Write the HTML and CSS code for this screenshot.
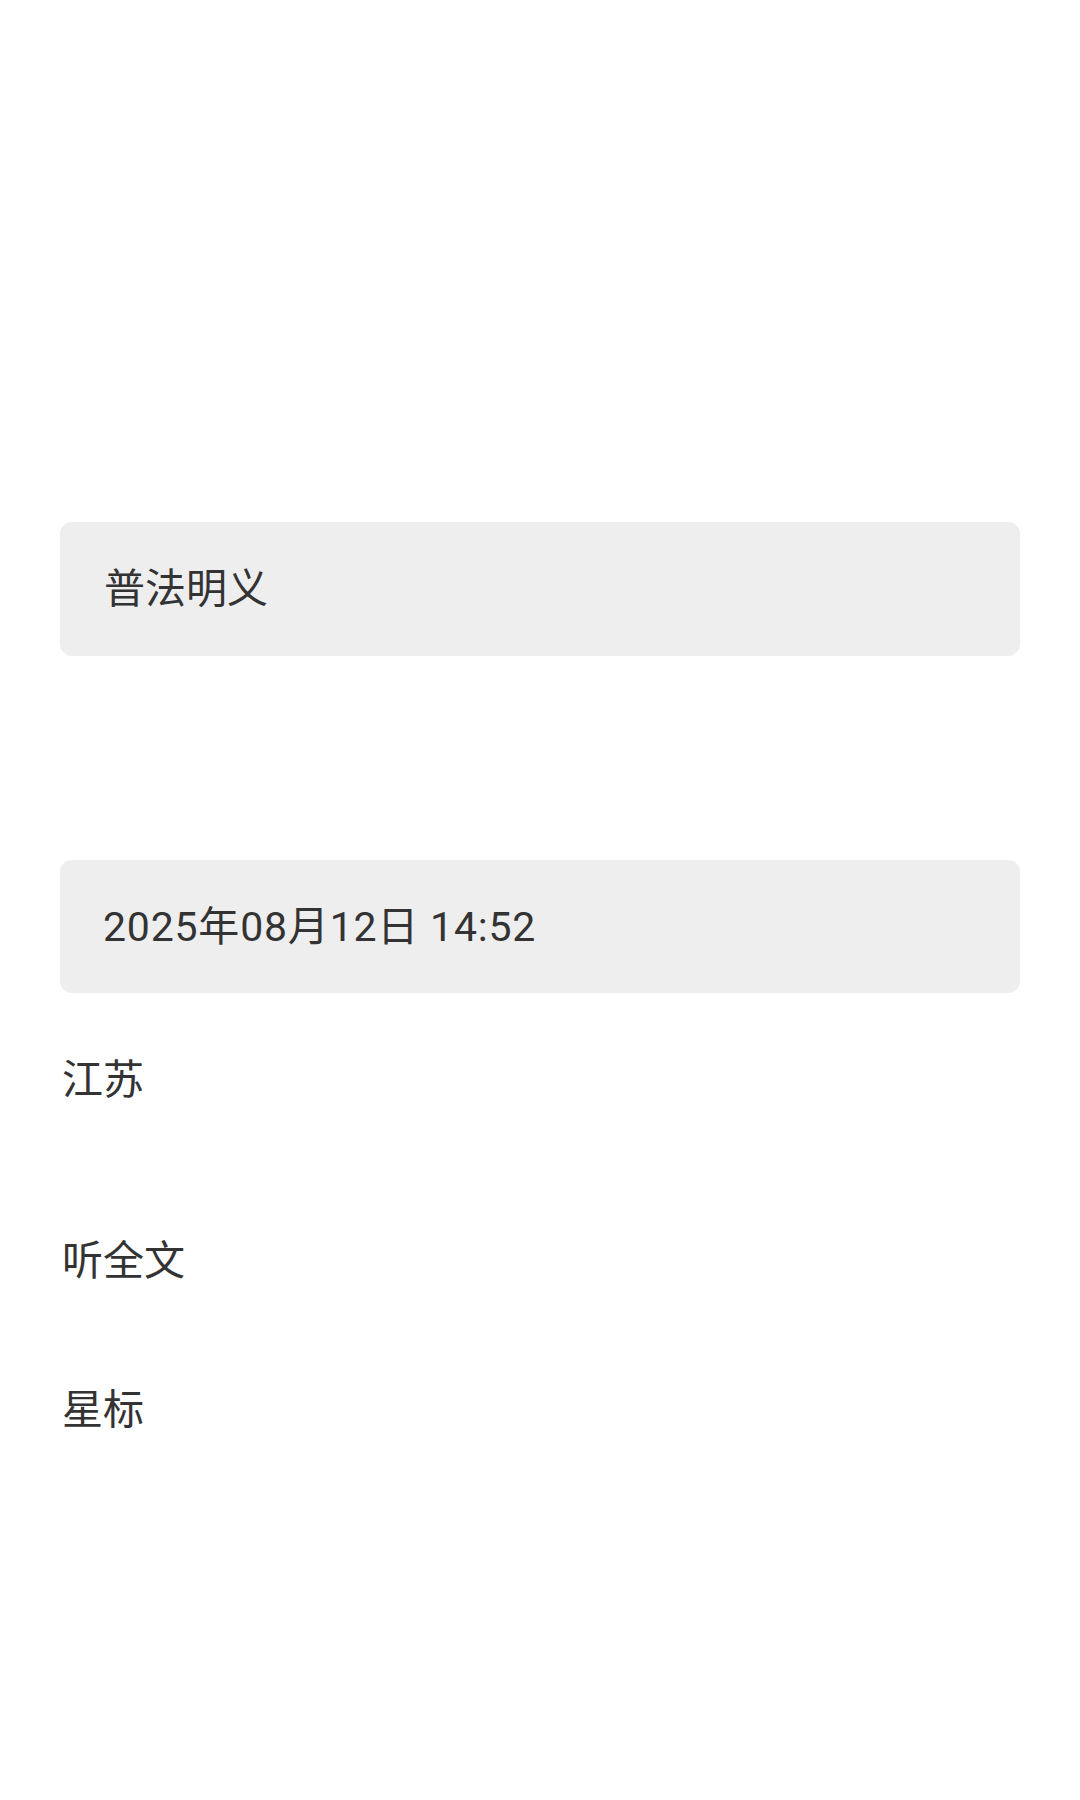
FILE: index.html
```html
<!DOCTYPE html>
<html lang="zh-CN">
<head>
<meta charset="utf-8">
<title>普法明义</title>
<link rel="stylesheet" href="styles.css">
</head>
<body>
<main class="page">
  <div class="field field-title"><span class="field-text">普法明义</span></div>
  <div class="field field-date"><span class="field-text date-text">2025年08月12日 14:52</span></div>
  <div class="label label-region">江苏</div>
  <div class="label label-listen">听全文</div>
  <div class="label label-star">星标</div>
</main>
</body>
</html>
```
FILE: styles.css
```css
html, body {
  margin: 0;
  padding: 0;
  background: #ffffff;
}

body {
  font-family: Roboto, "Noto Sans CJK SC", sans-serif;
  color: #333333;
  font-size: 41px;
  width: 1080px;
  min-height: 1800px;
}

.page {
  display: flex;
  flex-direction: column;
  padding-top: 522px;
}

.field {
  display: flex;
  align-items: center;
  margin: 0 60px;
  height: 134px;
  box-sizing: border-box;
  padding: 0 0 0 44px;
  background: #eeeeee;
  border-radius: 12px;
}

.field-text {
  line-height: 60px;
  white-space: nowrap;
}

.date-text {
  letter-spacing: 0.8px;
}

.field-date {
  margin-top: 204px;
  height: 133px;
  padding-left: 43px;
}

.label {
  line-height: 60px;
  padding-left: 62px;
}

.label-region {
  margin-top: 57px;
}

.label-listen {
  margin-top: 121px;
}

.label-star {
  margin-top: 89px;
}
```
